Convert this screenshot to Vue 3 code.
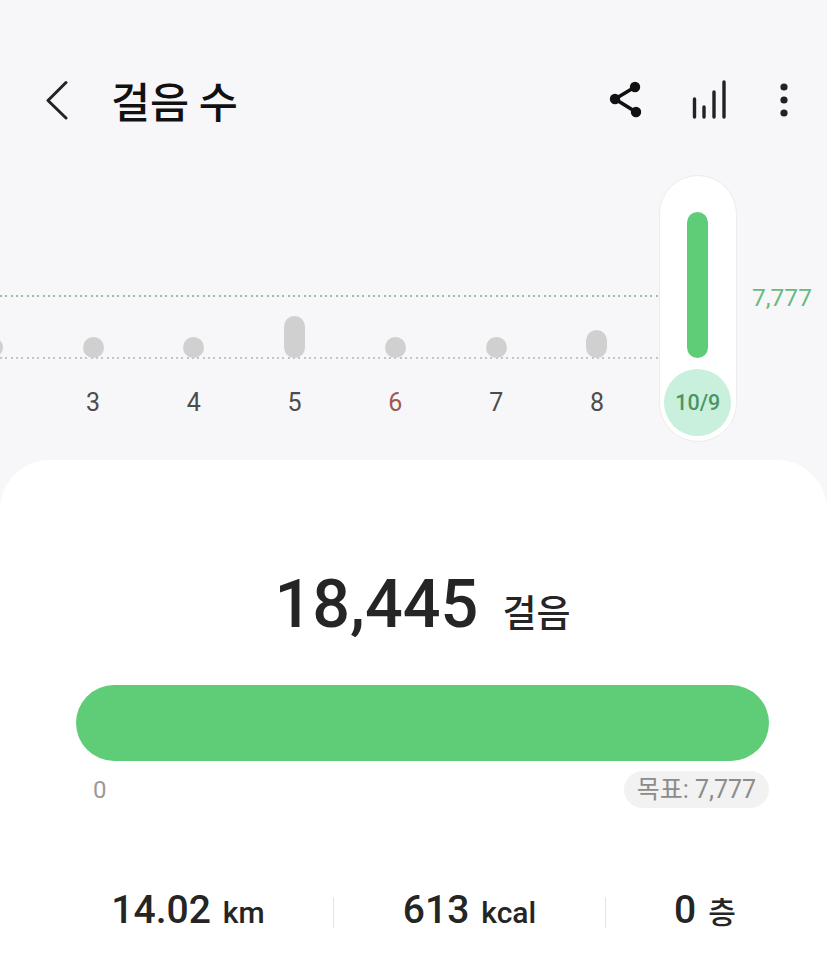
<script setup>
const days = [
  { label: '', height: 21 },
  { label: '3', height: 21 },
  { label: '4', height: 21 },
  { label: '5', height: 42 },
  { label: '6', height: 21, sunday: true },
  { label: '7', height: 21 },
  { label: '8', height: 28 }
]
</script>

<template>
  <div class="page">
    <header class="header">
      <svg class="back" width="24" height="40" viewBox="0 0 24 40" fill="none">
        <path d="M21 2.5 3 20.5 21 38" stroke="#222" stroke-width="3" stroke-linecap="round" stroke-linejoin="round" />
      </svg>
      <h1 class="title">걸음 수</h1>
      <div class="actions">
        <svg width="36" height="40" viewBox="0 0 36 40" fill="#111">
          <path d="M27 7 7 19 28 32" fill="none" stroke="#111" stroke-width="3.6" />
          <circle cx="27" cy="7" r="5.2" />
          <circle cx="7" cy="19" r="5.2" />
          <circle cx="28" cy="32" r="5.2" />
        </svg>
        <svg class="bars" width="38" height="40" viewBox="0 0 38 40" fill="none" stroke="#222" stroke-width="3.4" stroke-linecap="round">
          <path d="M4.5 19v18M14 27v10M24 12v25M34 2v35" />
        </svg>
        <svg class="dots" width="16" height="40" viewBox="0 0 16 40" fill="#222">
          <circle cx="8" cy="7" r="3.6" />
          <circle cx="8" cy="20" r="3.6" />
          <circle cx="8" cy="33" r="3.6" />
        </svg>
      </div>
    </header>

    <section class="chart">
      <div class="line goal-line"></div>
      <div class="line base-line"></div>
      <span class="goal-label">7,777</span>
      <div v-for="day in days" :key="day.height + day.label" class="day">
        <div class="slot">
          <div class="bar" :style="{ height: day.height + 'px' }"></div>
        </div>
        <div class="day-label" :class="{ sunday: day.sunday }">{{ day.label }}</div>
      </div>
      <div class="day today">
        <div class="pill"></div>
        <div class="slot">
          <div class="bar today-bar"></div>
        </div>
        <div class="day-label today-label">10/9</div>
      </div>
    </section>

    <main class="card">
      <div class="total">
        <span class="total-value">18,445</span>
        <span class="total-unit">걸음</span>
      </div>
      <div class="progress"></div>
      <div class="scale">
        <span class="zero">0</span>
        <span class="target">목표: 7,777</span>
      </div>
      <div class="stats">
        <div class="stat first"><b>14.02</b><span>km</span></div>
        <i class="divider"></i>
        <div class="stat second"><b>613</b><span>kcal</span></div>
        <i class="divider"></i>
        <div class="stat third"><b>0</b><span>층</span></div>
      </div>
    </main>
  </div>
</template>

<style>
html, body {
  margin: 0;
  background: #f7f7f9;
}
</style>

<style scoped>
.page {
  width: 827px;
  height: 961px;
  overflow: hidden;
  background: #f7f7f9;
  font-family: Roboto, "Noto Sans CJK KR", sans-serif;
  color: #252525;
}
.header {
  display: flex;
  align-items: center;
  height: 60px;
  padding: 70px 35px 30px 45px;
}
.title {
  margin: 0 0 0 42px;
  font-size: 42.5px;
  font-weight: 500;
  line-height: 60px;
  color: #111;
  font-family: "Noto Sans CJK KR", sans-serif;
}
.actions {
  display: flex;
  align-items: center;
  margin-left: auto;
}
.bars {
  margin-left: 46px;
}
.dots {
  margin-left: 48px;
}
.chart {
  position: relative;
  display: flex;
  height: 300px;
}
.line {
  position: absolute;
  left: 0;
  width: 659px;
  height: 2px;
}
.goal-line {
  top: 135px;
  background: repeating-linear-gradient(90deg, #8fc5a0 0 2px, transparent 2px 5.33px);
}
.base-line {
  top: 197px;
  background: repeating-linear-gradient(90deg, #c4c4c4 0 2px, transparent 2px 5.33px);
}
.goal-label {
  position: absolute;
  left: 752px;
  top: 123px;
  font-size: 24.5px;
  line-height: 30px;
  color: #66bb80;
}
.day {
  position: relative;
  flex: none;
  width: 100.8px;
  display: flex;
  flex-direction: column;
  align-items: center;
}
.day:nth-child(4) {
  margin-left: -58.2px;
}
.slot {
  position: relative;
  display: flex;
  align-items: flex-end;
  height: 198px;
}
.bar {
  width: 21px;
  border-radius: 11px;
  background: #d0d0d0;
}
.day-label {
  margin-top: 11px;
  width: 67px;
  height: 67px;
  line-height: 67px;
  text-align: center;
  font-size: 25px;
  color: #4c4c4c;
}
.sunday {
  color: #9c5a55;
}
.pill {
  position: absolute;
  top: 15px;
  left: 12px;
  box-sizing: border-box;
  width: 78px;
  height: 267px;
  border: 1px solid #ececec;
  border-radius: 39px;
  background: #fff;
}
.today-bar {
  height: 146px;
  background: #5fcd78;
}
.today-label {
  position: relative;
  border-radius: 50%;
  background: #c8f0dc;
  font-size: 21.5px;
  font-weight: 500;
  color: #4c9464;
}
.card {
  height: 501px;
  border-radius: 50px 50px 0 0;
  background: #fff;
  box-sizing: border-box;
  padding: 104px 58px 0 76px;
}
.total {
  display: flex;
  align-items: baseline;
  justify-content: center;
  height: 80px;
  line-height: 80px;
}
.total-value {
  font-size: 66.5px;
  font-weight: 500;
}
.total-unit {
  margin-left: 24px;
  font-family: "Noto Sans CJK KR", sans-serif;
  font-size: 37px;
  font-weight: 500;
}
.progress {
  margin-top: 41px;
  height: 76px;
  border-radius: 38px;
  background: #5fcd78;
}
.scale {
  display: flex;
  justify-content: space-between;
  align-items: center;
  height: 37px;
  margin-top: 10px;
}
.zero {
  margin-left: 17px;
  font-size: 24px;
  color: #9a9a9a;
}
.target {
  box-sizing: border-box;
  height: 37px;
  line-height: 37px;
  width: 145px;
  text-align: center;
  border-radius: 19px;
  background: #f2f2f2;
  font-size: 25px;
  color: #8c8c8c;
}
.stats {
  display: flex;
  align-items: center;
  margin: 81px -58px 0 -76px;
  padding-left: 43px;
  height: 44px;
}
.stat {
  display: flex;
  align-items: baseline;
  justify-content: center;
  gap: 12px;
  line-height: 44px;
}
.divider {
  flex: none;
  width: 1px;
  height: 31px;
  margin-top: 2px;
  background: #e4e4e4;
}
.first { width: 290px; }
.second { width: 271px; }
.third { width: 198px; }
.stat b {
  font-size: 39px;
  font-weight: 500;
}
.stat span {
  font-size: 30px;
  font-weight: 500;
}
</style>
